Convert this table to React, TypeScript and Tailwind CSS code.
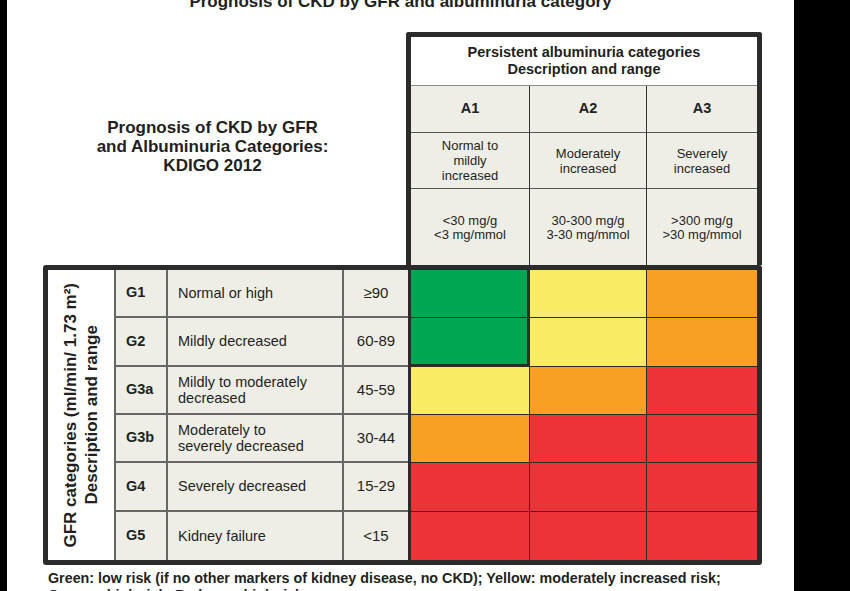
const gfrRows = [
  { g: "G1", desc: ["Normal or high"], range: "≥90", cells: ["green", "yellow", "orange"] },
  { g: "G2", desc: ["Mildly decreased"], range: "60-89", cells: ["green", "yellow", "orange"] },
  { g: "G3a", desc: ["Mildly to moderately", "decreased"], range: "45-59", cells: ["yellow", "orange", "red"] },
  { g: "G3b", desc: ["Moderately to", "severely decreased"], range: "30-44", cells: ["orange", "red", "red"] },
  { g: "G4", desc: ["Severely decreased"], range: "15-29", cells: ["red", "red", "red"] },
  { g: "G5", desc: ["Kidney failure"], range: "<15", cells: ["red", "red", "red"] },
]

const albRows = [
  { desc: ["Normal to", "mildly", "increased"], range: ["<30 mg/g", "<3 mg/mmol"] },
  { desc: ["Moderately", "increased"], range: ["30-300 mg/g", "3-30 mg/mmol"] },
  { desc: ["Severely", "increased"], range: [">300 mg/g", ">30 mg/mmol"] },
]

const colorClass: Record<string, string> = {
  green: "bg-[#00a651]",
  yellow: "bg-[#f7ec63]",
  orange: "bg-[#f7a021]",
  red: "bg-[#ee3338]",
}

function Lines({ lines }: { lines: string[] }) {
  return (
    <>
      {lines.map((l) => (
        <span key={l} className="block">
          {l}
        </span>
      ))}
    </>
  )
}

export default function App() {
  return (
    <main className="h-[591px] w-[850px] overflow-hidden bg-black">
      <div className="ml-[7px] h-full w-[787px] overflow-hidden bg-white font-['Liberation_Sans',Arial,sans-serif] text-[#231f20]">
        <h1 className="-mt-[8px] text-center text-[17px] font-bold leading-[20px]">
          Prognosis of CKD by GFR and albuminuria category
        </h1>

        <div className="ml-[36px] mt-[20px] w-[719px]">
          {/* top row */}
          <div className="flex h-[233px]">
            <div className="w-[363px] pr-[24px] pt-[86px] text-center text-[17px] font-bold leading-[19px]">
              <p>Prognosis of CKD by GFR</p>
              <p>and Albuminuria Categories:</p>
              <p>KDIGO 2012</p>
            </div>

            <div className="w-[356px] rounded-t-[3px] border-[5px] border-b-0 border-[#2b2b2b]">
              <div className="grid grid-cols-[119px_117px_110px] grid-rows-[49px_47px_56px_76px]">
                <div className="col-span-3 flex flex-col items-center justify-center border-b border-[#8c8c8c] bg-white text-[14.5px] font-bold leading-[17px]">
                  <span>Persistent albuminuria categories</span>
                  <span>Description and range</span>
                </div>
                {["A1", "A2", "A3"].map((a, i) => (
                  <div
                    key={a}
                    className={`flex items-center justify-center border-b-[1.5px] border-[#555] bg-[#efeee6] text-[14.5px] font-bold ${i < 2 ? "border-r" : ""} border-r-[#333]`}
                  >
                    {a}
                  </div>
                ))}
                {albRows.map((r, i) => (
                  <div
                    key={"d" + i}
                    className={`flex flex-col items-center justify-center border-b-[1.5px] border-[#555] bg-[#efeee6] text-center text-[13px] leading-[15px] ${i < 2 ? "border-r" : ""} border-r-[#333]`}
                  >
                    <Lines lines={r.desc} />
                  </div>
                ))}
                {albRows.map((r, i) => (
                  <div
                    key={"r" + i}
                    className={`flex flex-col items-center justify-center bg-[#efeee6] pt-[2px] text-center text-[13px] leading-[14px] ${i < 2 ? "border-r" : ""} border-r-[#333]`}
                  >
                    <Lines lines={r.range} />
                  </div>
                ))}
              </div>
            </div>
          </div>

          {/* bottom box */}
          <div className="h-[300px] rounded-[3px] border-[5px] border-[#2b2b2b]">
            <div className="grid h-full grid-cols-[68px_52px_176px_64px_122px_117px_110px] grid-rows-6">
              <div className="row-span-6 flex items-center justify-center border-r-2 border-[#666] bg-white">
                <p className="rotate-180 text-center text-[17px] font-bold leading-[21px] [writing-mode:vertical-rl]">
                  <span className="block">GFR categories (ml/min/ 1.73 m²)</span>
                  <span className="block">Description and range</span>
                </p>
              </div>

              {gfrRows.map((row, ri) => {
                const last = ri === gfrRows.length - 1
                const rowLine = last ? "" : "border-b-2"
                return [
                  <div
                    key={row.g + "g"}
                    className={`flex items-center border-r-2 border-[#666] bg-[#efeee6] pl-[10px] text-[14.5px] font-bold ${rowLine}`}
                  >
                    {row.g}
                  </div>,
                  <div
                    key={row.g + "d"}
                    className={`flex flex-col justify-center border-r-2 border-[#666] bg-[#efeee6] pl-[10px] text-[14.5px] leading-[16px] ${rowLine}`}
                  >
                    <Lines lines={row.desc} />
                  </div>,
                  <div
                    key={row.g + "r"}
                    className={`flex items-center justify-center border-[#666] bg-[#efeee6] text-[15px] ${rowLine}`}
                  >
                    {row.range}
                  </div>,
                  ...row.cells.map((c, ci) => {
                    const green = c === "green"
                    const cls = [
                      colorClass[c],
                      "border-[#2b2b2b]",
                      ci === 0 ? "border-l-[3px]" : "",
                      ci < 2 ? (green ? "border-r-[3px]" : "border-r") : "",
                      green && ri === 1 ? "border-b-[3px]" : last ? "" : "border-b",
                    ].join(" ")
                    return <div key={row.g + ci} className={cls} />
                  }),
                ]
              })}
            </div>
          </div>
        </div>

        <p className="ml-[41px] mt-[5px] text-[14.3px] font-bold leading-[17px]">
          Green: low risk (if no other markers of kidney disease, no CKD); Yellow: moderately increased risk;
          <br />
          Orange: high risk; Red, very high risk.
        </p>
      </div>
    </main>
  )
}
